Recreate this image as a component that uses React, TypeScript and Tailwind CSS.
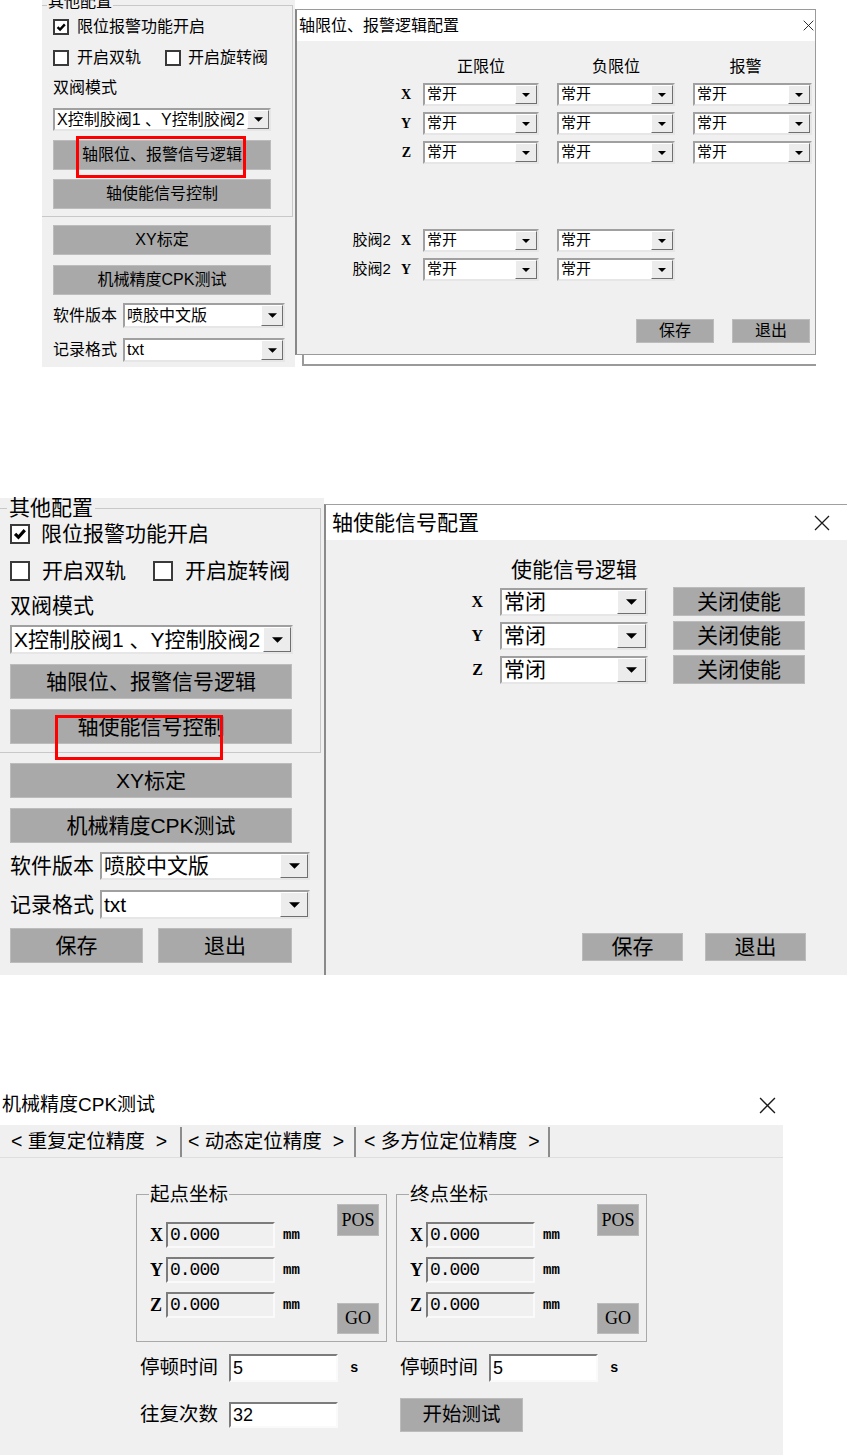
import React from 'react';

const SANS = "font-['Liberation_Sans','Noto_Sans_CJK_SC',sans-serif]";
const MONO = "font-['Liberation_Mono','Noto_Sans_CJK_SC',monospace]";
const SERIF = "font-['Liberation_Serif','Noto_Sans_CJK_SC',serif]";

function Arrow({ w }: { w: number }) {
  return (
    <svg width={w} height={Math.ceil(w / 2)} viewBox="0 0 10 5" aria-hidden>
      <path d="M0 0H10L5 5Z" fill="#000" />
    </svg>
  );
}

function CloseX({ size }: { size: number }) {
  return (
    <svg width={size} height={size} viewBox="0 0 16 16" aria-hidden>
      <path d="M1 1L15 15M15 1L1 15" stroke="#1a1a1a" strokeWidth="1.3" fill="none" />
    </svg>
  );
}

function Combo({ value, box, drop, arrow }: { value: string; box: string; drop: string; arrow: number }) {
  return (
    <div
      className={`flex shrink-0 border-2 border-t-[#a0a0a0] border-l-[#a0a0a0] border-r-[#e6e6e6] border-b-[#e6e6e6] bg-white ${box}`}
    >
      <span className="flex min-w-0 flex-1 items-center overflow-hidden whitespace-nowrap pl-[2px]">{value}</span>
      <span
        className={`flex shrink-0 items-center justify-center border border-t-white border-l-white border-r-[#6f6f6f] border-b-[#6f6f6f] bg-[#ececec] ${drop}`}
      >
        <Arrow w={arrow} />
      </span>
    </div>
  );
}

function Btn({ label, box }: { label: React.ReactNode; box: string }) {
  return (
    <div className={`flex shrink-0 items-center justify-center border border-[#bcbcbc] bg-[#a9a9a9] ${box}`}>
      {label}
    </div>
  );
}

function Field({ value, box }: { value: React.ReactNode; box: string }) {
  return (
    <div
      className={`flex shrink-0 items-center border-2 border-t-[#7c7c7c] border-l-[#7c7c7c] border-r-[#fafafa] border-b-[#fafafa] pl-[2px] ${box}`}
    >
      {value}
    </div>
  );
}

function Check({ checked, box }: { checked?: boolean; box: string }) {
  return (
    <span className={`flex shrink-0 items-center justify-center border-2 border-[#3a3a3a] bg-white ${box}`}>
      {checked && (
        <svg viewBox="0 0 12 12" className="h-[85%] w-[85%]" aria-hidden>
          <path d="M1.8 6L4.8 9L10.4 2.8" stroke="#000" strokeWidth="2.8" fill="none" />
        </svg>
      )}
    </span>
  );
}

// first capture: limit / alarm logic dialog
function LimitShot() {
  const axes = ['X', 'Y', 'Z'];
  return (
    <section className="relative flex h-[367px] shrink-0 overflow-hidden pl-[42px]">
      <div className="flex w-[253px] shrink-0 flex-col bg-[#f0f0f0] text-[16px] leading-[22px]">
        <fieldset className="-mt-[6px] w-[251px] border-y border-r border-[#c8c8c8] pb-[7px]">
          <legend className="relative -top-[3px] ml-[5px] px-[1px]">其他配置</legend>
          <div className="flex flex-col pl-[11px]">
            <div className="flex h-[22px] items-center">
              <Check checked box="h-[16px] w-[16px]" />
              <span className="ml-[8px]">限位报警功能开启</span>
            </div>
            <div className="mt-[9px] flex h-[22px] items-center">
              <Check box="h-[16px] w-[16px]" />
              <span className="ml-[8px] w-[88px]">开启双轨</span>
              <Check box="h-[16px] w-[16px]" />
              <span className="ml-[7px]">开启旋转阀</span>
            </div>
            <div className="mt-[8px] h-[22px]">双阀模式</div>
            <Combo value="X控制胶阀1 、Y控制胶阀2" box="mt-[9px] h-[23px] w-[218px]" drop="w-[22px]" arrow={9} />
            <Btn label="轴限位、报警信号逻辑" box="mt-[9px] h-[30px] w-[218px]" />
            <Btn label="轴使能信号控制" box="mt-[9px] h-[30px] w-[218px]" />
          </div>
        </fieldset>
        <div className="flex flex-col pl-[11px]">
          <Btn label="XY标定" box="mt-[8px] h-[30px] w-[218px]" />
          <Btn label="机械精度CPK测试" box="mt-[10px] h-[30px] w-[218px]" />
          <div className="mt-[8px] flex h-[25px] items-center">
            <span className="w-[70px]">软件版本</span>
            <Combo value="喷胶中文版" box="h-[25px] w-[162px]" drop="w-[22px]" arrow={9} />
          </div>
          <div className="mt-[10px] flex h-[24px] items-center">
            <span className="w-[70px]">记录格式</span>
            <Combo value="txt" box="h-[24px] w-[162px]" drop="w-[22px]" arrow={9} />
          </div>
        </div>
      </div>

      <div className="flex w-[521px] shrink-0 flex-col">
        <div className="mt-[9px] flex h-[346px] flex-col border border-l-2 border-[#9a9a9a] border-l-[#888888]">
          <div className="flex h-[31px] items-center justify-between bg-white pl-[2px] pr-[1px] text-[16px]">
            <span>轴限位、报警逻辑配置</span>
            <CloseX size={11} />
          </div>
          <div className="flex flex-1 flex-col bg-[#f0f0f0] text-[15px]">
            <div className="mt-[15px] flex h-[22px] text-[16px] leading-[22px]">
              <span className="ml-[126px] w-[116px] text-center">正限位</span>
              <span className="ml-[18px] w-[118px] text-center">负限位</span>
              <span className="ml-[18px] w-[119px] pr-[14px] text-center">报警</span>
            </div>
            <div className="mt-[5px] flex flex-col gap-[6px]">
              {axes.map((a) => (
                <div key={a} className="flex h-[23px] items-center">
                  <span className={`w-[115px] pr-[1px] text-right text-[14px] font-bold ${SERIF}`}>{a}</span>
                  <Combo value="常开" box="ml-[11px] h-[23px] w-[116px]" drop="w-[22px]" arrow={8} />
                  <Combo value="常开" box="ml-[18px] h-[23px] w-[118px]" drop="w-[22px]" arrow={8} />
                  <Combo value="常开" box="ml-[18px] h-[23px] w-[119px]" drop="w-[22px]" arrow={8} />
                </div>
              ))}
            </div>
            <div className="mt-[65px] flex flex-col gap-[6px]">
              {['X', 'Y'].map((a) => (
                <div key={a} className="flex h-[23px] items-center">
                  <span className="flex w-[115px] items-center justify-end gap-[10px] pr-[1px]">
                    <span>胶阀2</span>
                    <span className={`text-[14px] font-bold ${SERIF}`}>{a}</span>
                  </span>
                  <Combo value="常开" box="ml-[11px] h-[23px] w-[116px]" drop="w-[22px]" arrow={8} />
                  <Combo value="常开" box="ml-[18px] h-[23px] w-[118px]" drop="w-[22px]" arrow={8} />
                </div>
              ))}
            </div>
            <div className="mt-[38px] flex justify-end gap-[18px] pr-[5px] text-[16px]">
              <Btn label="保存" box="h-[24px] w-[78px]" />
              <Btn label="退出" box="h-[24px] w-[78px]" />
            </div>
          </div>
        </div>
        <div className="ml-[7px] h-[11px] border-b-2 border-l-2 border-[#9a9a9a]" />
      </div>

      <div className="pointer-events-none absolute left-[76px] top-[136px] h-[42px] w-[170px] border-[3px] border-[#ff0000]" />
    </section>
  );
}

// second capture: axis enable dialog
function EnableShot() {
  return (
    <section className="relative mt-[131px] flex h-[477px] shrink-0">
      <div className="flex w-[324px] shrink-0 flex-col bg-[#f0f0f0] text-[21px] leading-[26px]">
        <fieldset className="w-[321px] border-y border-r border-[#c8c8c8] pb-[8px]">
          <legend className="ml-[7px] px-[2px] leading-[20px]">其他配置</legend>
          <div className="flex flex-col pl-[10px]">
            <div className="mt-[3px] flex h-[26px] items-center">
              <Check checked box="h-[20px] w-[20px]" />
              <span className="ml-[11px]">限位报警功能开启</span>
            </div>
            <div className="mt-[11px] flex h-[26px] items-center">
              <Check box="h-[20px] w-[20px]" />
              <span className="ml-[12px] w-[111px]">开启双轨</span>
              <Check box="h-[20px] w-[20px]" />
              <span className="ml-[12px]">开启旋转阀</span>
            </div>
            <div className="mt-[9px] h-[26px]">双阀模式</div>
            <Combo value="X控制胶阀1 、Y控制胶阀2" box="mt-[6px] h-[29px] w-[283px]" drop="w-[28px]" arrow={11} />
            <Btn label="轴限位、报警信号逻辑" box="mt-[10px] h-[35px] w-[282px]" />
            <Btn label="轴使能信号控制" box="mt-[10px] h-[35px] w-[282px]" />
          </div>
        </fieldset>
        <div className="flex flex-col pl-[10px]">
          <Btn label="XY标定" box="mt-[10px] h-[35px] w-[282px]" />
          <Btn label="机械精度CPK测试" box="mt-[10px] h-[35px] w-[282px]" />
          <div className="mt-[9px] flex h-[28px] items-center">
            <span className="w-[90px]">软件版本</span>
            <Combo value="喷胶中文版" box="h-[28px] w-[210px]" drop="w-[28px]" arrow={11} />
          </div>
          <div className="mt-[10px] flex h-[29px] items-center">
            <span className="w-[90px]">记录格式</span>
            <Combo value="txt" box="h-[29px] w-[210px]" drop="w-[28px]" arrow={11} />
          </div>
          <div className="mt-[9px] flex gap-[15px]">
            <Btn label="保存" box="h-[35px] w-[133px]" />
            <Btn label="退出" box="h-[35px] w-[134px]" />
          </div>
        </div>
      </div>

      <div className="mt-[6px] flex h-[471px] w-[523px] shrink-0 flex-col border-t border-l-2 border-t-[#a0a0a0] border-l-[#8a8a8a] text-[21px]">
        <div className="flex h-[35px] items-center justify-between bg-white pl-[6px] pr-[17px]">
          <span>轴使能信号配置</span>
          <CloseX size={16} />
        </div>
        <div className="flex flex-1 flex-col bg-[#f0f0f0]">
          <div className="mt-[16px] flex h-[28px] leading-[28px]">
            <span className="ml-[174px] w-[148px] text-center">使能信号逻辑</span>
          </div>
          <div className="mt-[3px] flex flex-col gap-[5px]">
            {['X', 'Y', 'Z'].map((a) => (
              <div key={a} className="flex h-[29px] items-center">
                <span className={`w-[157px] text-right text-[16px] font-bold ${SERIF}`}>{a}</span>
                <Combo value="常闭" box="ml-[17px] h-[28px] w-[148px]" drop="w-[29px]" arrow={11} />
                <Btn label="关闭使能" box="ml-[25px] h-[29px] w-[132px]" />
              </div>
            ))}
          </div>
          <div className="mt-[249px] flex justify-end gap-[22px] pr-[41px]">
            <Btn label="保存" box="h-[28px] w-[101px]" />
            <Btn label="退出" box="h-[28px] w-[101px]" />
          </div>
        </div>
      </div>

      <div className="pointer-events-none absolute left-[55px] top-[217px] h-[45px] w-[168px] border-[3px] border-[#ff0000]" />
    </section>
  );
}

function CoordGroup({ title }: { title: string }) {
  return (
    <fieldset className="w-[251px] border border-[#a9a9a9] pb-[7px]">
      <legend className="ml-[12px] px-[1px] leading-[20px]">{title}</legend>
      <div className="flex h-[130px]">
        <div className="flex flex-col gap-[9px] pl-[13px] pt-[18px]">
          {['X', 'Y', 'Z'].map((a) => (
            <div key={a} className="flex h-[26px] items-center">
              <span className={`w-[11px] text-[18px] font-bold leading-none ${SERIF}`}>{a}</span>
              <Field
                value={<span className={`text-[18px] tracking-[-1px] ${MONO}`}>0.000</span>}
                box="ml-[5px] h-[26px] w-[109px] bg-[#f0f0f0]"
              />
              <span className={`ml-[8px] text-[14px] font-bold ${MONO}`}>mm</span>
            </div>
          ))}
        </div>
        <div className={`ml-auto flex flex-col justify-between pr-[7px] text-[18px] ${SERIF}`}>
          <Btn label="POS" box="h-[32px] w-[42px]" />
          <Btn label="GO" box="h-[31px] w-[42px]" />
        </div>
      </div>
    </fieldset>
  );
}

// third capture: CPK precision test window
function CpkShot() {
  return (
    <section className="mt-[110px] flex h-[370px] w-[783px] shrink-0 flex-col text-[19.5px]">
      <div className="flex h-[40px] items-center justify-between bg-white pl-[2px] pr-[7px] text-[19px]">
        <span>机械精度CPK测试</span>
        <CloseX size={17} />
      </div>
      <div className="flex flex-1 flex-col bg-[#f0f0f0]">
        <div className="mt-[2px] flex h-[31px] border-b border-[#dedede]">
          <div className="flex w-[182px] items-center border-r-2 border-[#8c8c8c] pl-[11px]">
            {'<\u00a0'}重复定位精度{'\u00a0\u00a0>'}
          </div>
          <div className="flex w-[174px] items-center border-r-2 border-[#8c8c8c] pl-[6px]">
            {'<\u00a0'}动态定位精度{'\u00a0\u00a0>'}
          </div>
          <div className="flex w-[194px] items-center border-r-2 border-[#8c8c8c] pl-[8px]">
            {'<\u00a0'}多方位定位精度{'\u00a0\u00a0>'}
          </div>
        </div>

        <div className="mt-[26px] flex gap-[9px] pl-[136px]">
          <CoordGroup title="起点坐标" />
          <CoordGroup title="终点坐标" />
        </div>

        <div className="mt-[12px] grid grid-cols-[260px_260px] pl-[136px]">
          {[0, 1].map((i) => (
            <div key={i} className="flex h-[28px] items-center pl-[4px]">
              <span className="w-[78px]">停顿时间</span>
              <Field value="5" box="ml-[11px] h-[28px] w-[109px] bg-white text-[18px]" />
              <span className={`ml-[12px] text-[14px] font-bold ${MONO}`}>s</span>
            </div>
          ))}
        </div>
        <div className="mt-[16px] grid grid-cols-[260px_260px] pl-[136px]">
          <div className="flex h-[34px] items-center pl-[4px]">
            <span className="w-[78px]">往复次数</span>
            <Field value="32" box="ml-[11px] h-[26px] w-[109px] bg-white text-[18px]" />
          </div>
          <div className="flex h-[34px] items-center pl-[4px]">
            <Btn label="开始测试" box="h-[34px] w-[123px]" />
          </div>
        </div>
      </div>
    </section>
  );
}

export default function App() {
  return (
    <div className={`flex h-[1455px] w-[847px] flex-col overflow-hidden bg-white text-black ${SANS}`}>
      <LimitShot />
      <EnableShot />
      <CpkShot />
    </div>
  );
}
